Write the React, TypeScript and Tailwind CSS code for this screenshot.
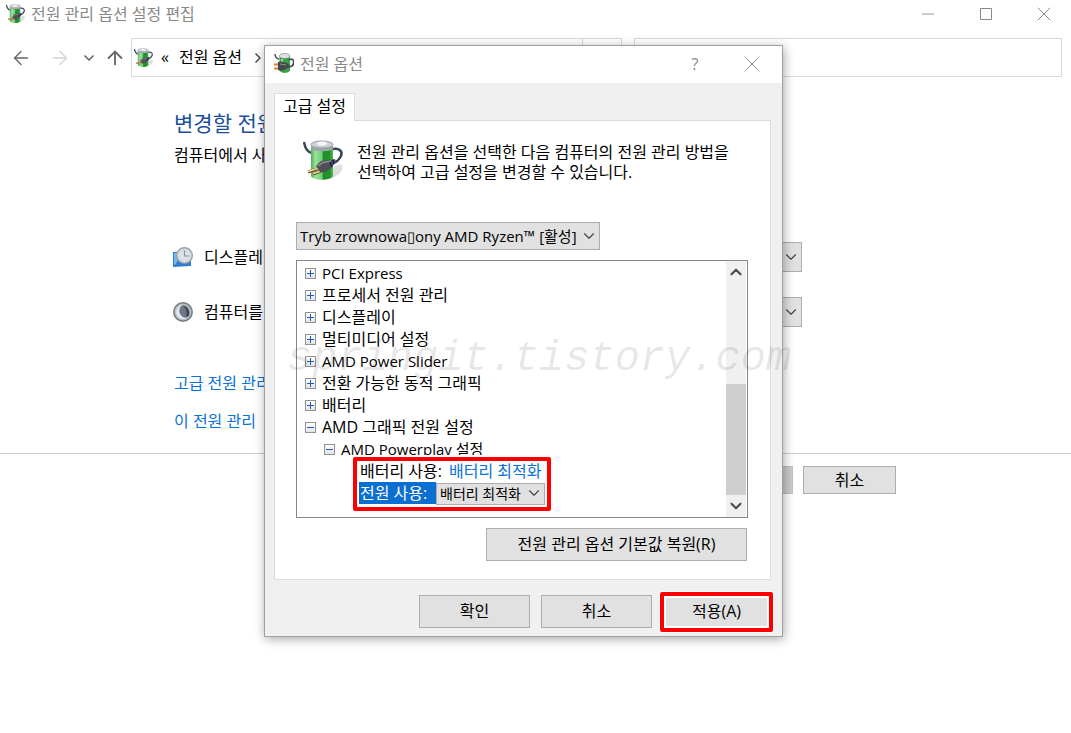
import { ArrowLeft, ArrowRight, ArrowUp, ChevronDown, ChevronRight, Minus, X } from "lucide-react";
import { clsx } from "clsx";

import type { ReactNode } from "react";

const treeItems = [
  { label: "PCI Express", latin: true },
  { label: "프로세서 전원 관리" },
  { label: "디스플레이" },
  { label: "멀티미디어 설정" },
  { label: "AMD Power Slider", latin: true },
  { label: "전환 가능한 동적 그래픽" },
  { label: "배터리" },
  { label: "AMD 그래픽 전원 설정", expanded: true },
];

const BatteryIcon = ({ className }: { className?: string }) => (
  <svg
    viewBox="0 0 42 42"
    className={className}
    fill="none"
    aria-hidden="true">
    <defs>
      <linearGradient
        id="battery-body"
        x1="0"
        x2="1">
        <stop
          offset="0"
          stopColor="#4fae57"
        />
        <stop
          offset="0.2"
          stopColor="#9be29b"
        />
        <stop
          offset="0.5"
          stopColor="#6fd074"
        />
        <stop
          offset="0.55"
          stopColor="#1f8f2a"
        />
        <stop
          offset="0.85"
          stopColor="#23932e"
        />
        <stop
          offset="1"
          stopColor="#58b95f"
        />
      </linearGradient>
    </defs>
    <path
      d="M28 28 L38 24 Q42 28 36 34 L28 39z"
      fill="#dedede"
    />
    <path
      d="M1 2 C2 8 4 12 9 13"
      stroke="#3d4a5a"
      strokeWidth="2.5"
    />
    <path
      d="M8 5 V36 C10 41 28 41 30 36 V5z"
      fill="url(#battery-body)"
    />
    <path
      d="M8 5 V9 C11 12 27 12 30 9 V5z"
      fill="#9aa9a4"
    />
    <ellipse
      cx="19"
      cy="4.5"
      rx="11"
      ry="3.5"
      fill="#cfd2da"
      stroke="#9ba1a9"
    />
    <ellipse
      cx="19"
      cy="3.5"
      rx="5"
      ry="2"
      fill="#f6f6f8"
    />
    <path
      d="M30 9 C36 8 40 11 38 16 C36 20 34 22 30 23"
      stroke="#34445a"
      strokeWidth="2.5"
    />
    <path
      d="M14 29 L5 32 M18 31 L10 34"
      stroke="#6b5023"
      strokeWidth="3"
    />
    <path
      d="M14 28.500 L5 31.500 M18 31 L10 33.500"
      stroke="#f6dba8"
      strokeWidth="1.5"
    />
    <path
      d="M13 26 L18 21 L25 20 L32 19 L33 22 L28 28 L23 32 L17 32z"
      fill="#505157"
    />
    <path
      d="M15 26 L20 22.500 L28 21"
      stroke="#8d8f96"
      strokeWidth="1.5"
    />
    <path
      d="M27 22 L29 27 M30 20 L31 24"
      stroke="#1b1a55"
      strokeWidth="1.5"
    />
  </svg>
);

const PlugBatteryIcon = () => (
  <svg
    viewBox="0 0 20 21"
    className="h-[21px] w-5"
    fill="none"
    aria-hidden="true">
    <path
      d="M1 1 Q1 5 5 6"
      stroke="#4d5560"
      strokeWidth="1.5"
    />
    <path
      d="M5.500 3 V18 Q10.500 22 16 18 V3z"
      fill="#38a244"
    />
    <path
      d="M8 6 V18"
      stroke="#8fe093"
      strokeWidth="2"
    />
    <ellipse
      cx="10.700"
      cy="3"
      rx="5.300"
      ry="2.500"
      fill="#dfe2e5"
      stroke="#7f868d"
      strokeWidth="0.700"
    />
    <path
      d="M15 7 C20 4 21 10 18 13 C16 14 15 14 13 14"
      stroke="#454b53"
      strokeWidth="1.800"
    />
    <path
      d="M0 11.500 H5 M0 15.500 H5"
      stroke="#d9822b"
      strokeWidth="2"
    />
    <path
      d="M4 9 L7 8.500 L13 10 L16 13 L12 16 L8 18 L4 17z"
      fill="#45474d"
    />
    <path
      d="M6 11 L12 12"
      stroke="#94969b"
    />
  </svg>
);

const DisplayTimeoutIcon = () => (
  <svg
    viewBox="0 0 20 20"
    className="size-5"
    aria-hidden="true">
    <path
      d="M0 5 L18 4 V19 L0 20z"
      fill="#2f7bd0"
    />
    <path
      d="M1 6 L8 5 L3 17 L1 18z"
      fill="#79b7ee"
    />
    <circle
      cx="11.500"
      cy="8.500"
      r="7.800"
      fill="#dfe3e7"
      stroke="#9aa1a8"
      strokeWidth="1.400"
    />
    <circle
      cx="11.500"
      cy="8.500"
      r="5.500"
      fill="none"
      stroke="#b6c0ca"
      strokeDasharray="1 2"
    />
    <path
      d="M11.500 3.500 V9 H16"
      fill="none"
      stroke="#8b959f"
      strokeWidth="1.200"
    />
  </svg>
);

const SleepIcon = () => (
  <svg
    viewBox="0 0 20 20"
    className="size-5"
    aria-hidden="true">
    <circle
      cx="10"
      cy="10"
      r="9.200"
      fill="#b9bfc5"
      stroke="#74797e"
      strokeWidth="1.500"
    />
    <path
      d="M10 3 A7 7 0 1 0 15 15 C9 14 7 8 10 3z"
      fill="#dfe8f2"
    />
    <ellipse
      cx="11.500"
      cy="9.500"
      rx="5"
      ry="6.500"
      transform="rotate(-20 11.500 9.500)"
      fill="#6c7985"
    />
    <path
      d="M10 4 Q17 6 16 13 Q15 16 13 14 Q15 9 10 4z"
      fill="#41474d"
    />
  </svg>
);

const IconButton = ({ label, className, children }: { label: string; className?: string; children: ReactNode }) => (
  <button
    type="button"
    aria-label={label}
    className={clsx("flex items-center justify-center", className)}>
    {children}
  </button>
);

const PushButton = ({ className, children }: { className?: string; children: ReactNode }) => (
  <button
    type="button"
    className={clsx("border border-[#adadad] bg-[#e1e1e1]", className)}>
    {children}
  </button>
);

const Dropdown = ({
  label,
  value,
  className,
  selectClassName,
}: {
  label: string;
  value: string;
  className?: string;
  selectClassName?: string;
}) => (
  <div className={clsx("relative", className)}>
    <select
      aria-label={label}
      className={clsx("size-full appearance-none border border-[#adadad] bg-[#e1e1e1]", selectClassName)}>
      <option>{value}</option>
    </select>
    <ChevronDown
      className="pointer-events-none absolute inset-y-0 right-0.5 my-auto size-[18px] text-[#444]"
      strokeWidth={1.5}
    />
  </div>
);

const Expander = ({ expanded }: { expanded?: boolean }) => (
  <button
    type="button"
    aria-label={expanded ? "축소" : "확장"}
    className="mt-px flex size-[11px] items-center justify-center border border-[#919191] bg-linear-to-b from-white to-[#e4e4e4]">
    <svg
      viewBox="0 0 7 7"
      className="size-[7px] stroke-[#1c5fb8]"
      aria-hidden="true">
      <path d={expanded ? "M0 3.500H7" : "M0 3.500H7M3.500 0V7"} />
    </svg>
  </button>
);

const Scrollbar = () => (
  <div className="mr-px flex w-5 flex-col items-center bg-[#f0f0f0] text-[#505050]">
    <IconButton
      label="위로 스크롤"
      className="h-[22px] w-full">
      <ChevronDown
        className="size-[18px] rotate-180"
        strokeWidth={3}
      />
    </IconButton>
    <div className="flex w-full flex-1 flex-col justify-end">
      <div className="h-[111px] bg-[#cdcfce]" />
    </div>
    <IconButton
      label="아래로 스크롤"
      className="h-[22px] w-full">
      <ChevronDown
        className="size-[18px]"
        strokeWidth={3}
      />
    </IconButton>
  </div>
);

const SettingsTree = () => (
  <div className="mt-2.5 flex h-[258px] border border-[#828790] bg-white">
    <ul className="flex-1 pt-px leading-[22px]">
      {treeItems.map(({ label, latin, expanded }) => (
        <li
          key={label}
          className={clsx("flex h-[22px] items-center gap-1.5 pl-2", latin && "text-[15px]")}>
          <Expander expanded={expanded} />
          {label}
        </li>
      ))}
      <li>
        <div className="flex h-[22px] items-center gap-1.5 pl-[27px] text-[15px]">
          <Expander expanded />
          AMD Powerplay 설정
        </div>
        <ul className="relative ml-[62px] w-fit">
          <li className="flex h-[22px] items-center gap-[7px] pl-px">
            배터리 사용: <span className="text-[#0a72d8]">배터리 최적화</span>
          </li>
          <li className="flex h-[22px] items-center">
            <span className="w-[77px] bg-[#0a6fd0] pl-px whitespace-nowrap text-white">전원 사용:</span>
            <Dropdown
              label="전원 사용"
              value="배터리 최적화"
              className="h-[22px] w-[109px]"
              selectClassName="pl-[3px] text-sm"
            />
          </li>
          <li
            aria-hidden="true"
            className="pointer-events-none absolute -inset-x-1.5 -top-[3px] -bottom-[7px] rounded-xs border-4 border-[#f00] ring-2 ring-white"
          />
        </ul>
      </li>
    </ul>
    <Scrollbar />
  </div>
);

const PowerOptionsDialog = () => (
  <section
    role="dialog"
    aria-label="전원 옵션"
    className="absolute top-[45px] left-[264px] w-[519px] border border-[#a0a0a0] bg-[#f0f0f0] shadow-[1px_2px_10px_rgba(0,0,0,0.35)]">
    <header className="flex h-[37px] items-center bg-white pb-0.5 pl-[9px] text-[#888]">
      <PlugBatteryIcon />
      <h2 className="ml-1.5 flex-1">전원 옵션</h2>
      <IconButton
        label="도움말"
        className="h-full w-[58px]">
        ?
      </IconButton>
      <IconButton
        label="닫기"
        className="h-full w-[58px] pr-0.5">
        <X
          className="size-6"
          strokeWidth={1}
        />
      </IconButton>
    </header>
    <div className="pt-2.5 pr-[11px] pl-[9px]">
      <div
        role="tablist"
        className="flex">
        <button
          type="button"
          role="tab"
          aria-selected="true"
          className="relative h-7 w-[81px] border border-b-0 border-[#dcdcdc] bg-white pb-1 whitespace-nowrap">
          고급 설정
        </button>
      </div>
      <div
        role="tabpanel"
        className="-mt-px border border-[#dcdcdc] bg-white pt-[21px] pr-[22px] pb-[18px] pl-[21px]">
        <div className="flex h-10 gap-3 pl-[7px]">
          <BatteryIcon className="-mt-0.5 size-[42px] shrink-0" />
          <p className="leading-5 whitespace-nowrap">
            전원 관리 옵션을 선택한 다음 컴퓨터의 전원 관리 방법을
            <br />
            선택하여 고급 설정을 변경할 수 있습니다.
          </p>
        </div>
        <Dropdown
          label="전원 관리 옵션"
          value="Tryb zrownowa▯ony AMD Ryzen™ [활성]"
          className="mt-10 h-7 w-[304px]"
          selectClassName="pl-[3px] text-[15px]"
        />
        <SettingsTree />
        <div className="mt-2.5 flex justify-end">
          <PushButton className="mr-px h-[33px] w-[261px] pb-0.5">전원 관리 옵션 기본값 복원(R)</PushButton>
        </div>
      </div>
    </div>
    <footer className="flex items-start justify-end pt-3 pr-[9px] pb-1">
      <PushButton className="mt-[3px] mr-[11px] h-[33px] w-[111px] pb-0.5">확인</PushButton>
      <PushButton className="mt-[3px] mr-2 h-[33px] w-[111px] pb-0.5">취소</PushButton>
      <div className="h-10 w-[113px] rounded-xs border-4 border-[#f00] bg-white p-0.5 ring-1 ring-white">
        <button
          type="button"
          className="size-full bg-[#e1e1e1] pb-0.5">
          적용(A)
        </button>
      </div>
    </footer>
  </section>
);

const Toolbar = () => (
  <nav className="mt-2.5 flex h-[39px] items-center pr-[9px] pl-2.5 text-[#666]">
    <IconButton
      label="뒤로"
      className="w-[22px]">
      <ArrowLeft
        className="size-[22px]"
        strokeWidth={1.5}
      />
    </IconButton>
    <IconButton
      label="앞으로"
      className="ml-[17px] w-[22px] text-[#d4d4d4]">
      <ArrowRight
        className="size-[22px]"
        strokeWidth={1.5}
      />
    </IconButton>
    <IconButton
      label="최근 위치"
      className="ml-2.5 w-4">
      <ChevronDown
        className="size-4"
        strokeWidth={2.5}
      />
    </IconButton>
    <IconButton
      label="위로"
      className="ml-[7px] w-[22px]">
      <ArrowUp
        className="size-[22px]"
        strokeWidth={2}
      />
    </IconButton>
    <div className="ml-[5px] flex h-full w-[491px] items-center border border-[#d9d9d9] pl-0.5 text-black">
      <BatteryIcon className="size-5" />
      <span className="ml-[7px] w-[18px] pb-0.5">«</span>
      <span className="pb-0.5">전원 옵션</span>
      <ChevronRight
        className="ml-2 size-4 text-[#555]"
        strokeWidth={2.5}
      />
      <div className="ml-auto h-full w-[39px] border-l border-[#d9d9d9]" />
    </div>
    <input
      type="search"
      aria-label="검색"
      className="ml-3 h-full min-w-0 flex-1 border border-[#d9d9d9]"
    />
  </nav>
);

const App = () => (
  <div className="relative min-h-screen overflow-hidden bg-white font-['Open_Sans','Noto_Sans_CJK_KR',sans-serif] text-base text-black">
    <header className="flex h-7 items-center pl-1.5 text-[#888]">
      <BatteryIcon className="size-5" />
      <h1 className="ml-[5px] flex-1">전원 관리 옵션 설정 편집</h1>
      <div className="-mr-0.5 flex">
        <IconButton
          label="최소화"
          className="h-7 w-[58px]">
          <Minus
            className="size-5"
            strokeWidth={1}
          />
        </IconButton>
        <IconButton
          label="최대화"
          className="h-7 w-[58px]">
          <svg
            viewBox="0 0 12 12"
            className="size-3 fill-none stroke-current"
            aria-hidden="true">
            <path d="M0.500 0.500H11.500V11.500H0.500z" />
          </svg>
        </IconButton>
        <IconButton
          label="닫기"
          className="h-7 w-[58px]">
          <X
            className="size-6"
            strokeWidth={1}
          />
        </IconButton>
      </div>
    </header>
    <Toolbar />
    <main className="pt-8 pl-[174px]">
      <h2 className="text-[21px] leading-7 text-[#1a4f9c]">변경할 전원</h2>
      <p className="mt-1.5 leading-6">컴퓨터에서 사용</p>
      <div className="mt-[75px] -ml-px flex w-[629px] flex-col gap-[25px]">
        <div className="flex h-[30px] items-center">
          <DisplayTimeoutIcon />
          <span className="ml-[11px] flex-1">디스플레이</span>
          <Dropdown
            label="디스플레이"
            value=""
            className="h-full w-[140px]"
          />
        </div>
        <div className="flex h-[30px] items-center">
          <SleepIcon />
          <span className="ml-[11px] flex-1">컴퓨터를</span>
          <Dropdown
            label="컴퓨터를"
            value=""
            className="h-full w-[140px]"
          />
        </div>
      </div>
      <div className="mt-11 flex flex-col items-start gap-3.5 leading-6 text-[#0a72d8]">
        <a href="#advanced">고급 전원 관리</a>
        <a href="#restore">이 전원 관리</a>
      </div>
    </main>
    <footer className="mt-5 flex gap-2.5 border-t border-[#ccc] pt-3 pl-[653px]">
      <button
        type="button"
        disabled
        aria-label="변경 내용 저장"
        className="h-7 w-[140px] border border-[#bfbfbf] bg-[#ccc]"
      />
      <PushButton className="h-7 w-[93px]">취소</PushButton>
    </footer>
    <PowerOptionsDialog />
    <div className="pointer-events-none absolute top-[335px] left-[287px] font-['Liberation_Mono',monospace] text-[42px] leading-12 text-black/10 italic">
      springit.tistory.com
    </div>
  </div>
);

export default App;
